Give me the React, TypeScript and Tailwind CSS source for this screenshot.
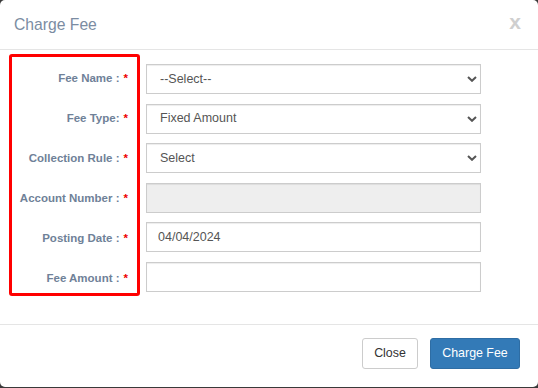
import { ChangeEvent, useState } from "react";

type Row = {
  label: string;
  kind: "select" | "input";
  value: string;
  options?: string[];
  disabled?: boolean;
};

const rows: Row[] = [
  { label: "Fee Name :", kind: "select", value: "--Select--", options: ["--Select--"] },
  { label: "Fee Type:", kind: "select", value: "Fixed Amount", options: ["Fixed Amount", "Percentage"] },
  { label: "Collection Rule :", kind: "select", value: "Select", options: ["Select"] },
  { label: "Account Number :", kind: "input", value: "", disabled: true },
  { label: "Posting Date :", kind: "input", value: "04/04/2024" },
  { label: "Fee Amount :", kind: "input", value: "" },
];

const Chevron = () => (
  <svg
    className="pointer-events-none absolute right-[4px] top-1/2 -translate-y-1/2"
    width="10"
    height="6"
    viewBox="0 0 10 6"
  >
    <path d="M1 1l4 3.8L9 1" fill="none" stroke="#555" strokeWidth="2" />
  </svg>
);

export default function App() {
  const [values, setValues] = useState<string[]>(rows.map((r) => r.value));

  const update = (i: number) => (e: ChangeEvent<HTMLInputElement | HTMLSelectElement>) => {
    const next = [...values];
    next[i] = e.target.value;
    setValues(next);
  };

  return (
    <div
      className="w-[538px] h-[388px] bg-[#3a3a3a]"
      style={{ fontFamily: '"Liberation Sans", Arial, sans-serif' }}
    >
      <div className="w-[538px] h-[387px] bg-white rounded-[5px] flex flex-col">
        {/* Header */}
        <div className="h-[50px] border-b border-[#e5e5e5] flex items-center justify-between pl-[14px] pr-[17px]">
          <h4 className="text-[15.7px] text-[#7b8ca2] leading-[18px]">Charge Fee</h4>
          <button className="text-[21px] font-bold leading-none text-[#cfcfcf] -mt-[6px]">x</button>
        </div>

        {/* Body */}
        <div className="flex-1 flex items-start pl-[9px] pt-[4px]">
          {/* Labels */}
          <div className="w-[131px] border-[3px] border-[#f00] rounded-[3px] pt-[6px] pr-[9px] flex flex-col gap-[10px]">
            {rows.map((r) => (
              <div
                key={r.label}
                className="h-[30px] pt-[2px] flex items-center justify-end text-[11.5px] font-bold text-[#6f8198] whitespace-nowrap"
              >
                {r.label}
                <span className="text-[#e00] ml-[4px]">*</span>
              </div>
            ))}
          </div>

          {/* Controls */}
          <div className="ml-[6px] mt-[10px] w-[335px] flex flex-col gap-[9.6px]">
            {rows.map((r, i) =>
              r.kind === "select" ? (
                <div key={r.label} className="relative h-[30px]">
                  <select
                    value={values[i]}
                    onChange={update(i)}
                    className="appearance-none w-full h-full border border-[#ccc] bg-white pl-[13px] text-[12.5px] text-[#555] outline-none shadow-[inset_0_1px_1px_rgba(0,0,0,0.075)]"
                  >
                    {r.options?.map((o) => (
                      <option key={o}>{o}</option>
                    ))}
                  </select>
                  <Chevron />
                </div>
              ) : (
                <input
                  key={r.label}
                  value={values[i]}
                  onChange={update(i)}
                  disabled={r.disabled}
                  className={`h-[30px] w-full border border-[#ccc] px-[11px] text-[12.5px] text-[#555] outline-none shadow-[inset_0_1px_1px_rgba(0,0,0,0.075)] ${
                    r.disabled ? "bg-[#eee]" : "bg-white"
                  }`}
                />
              )
            )}
          </div>
        </div>

        {/* Footer */}
        <div className="h-[63px] border-t border-[#e5e5e5] flex items-start justify-end gap-[12px] pt-[13px] pr-[18px]">
          <button className="h-[31px] w-[56px] border border-[#ccc] rounded-[3px] bg-white text-[12.4px] text-[#333]">
            Close
          </button>
          <button className="h-[31px] w-[90px] border border-[#2e6da4] rounded-[3px] bg-[#337ab7] text-[12.4px] text-white">
            Charge Fee
          </button>
        </div>
      </div>
    </div>
  );
}
